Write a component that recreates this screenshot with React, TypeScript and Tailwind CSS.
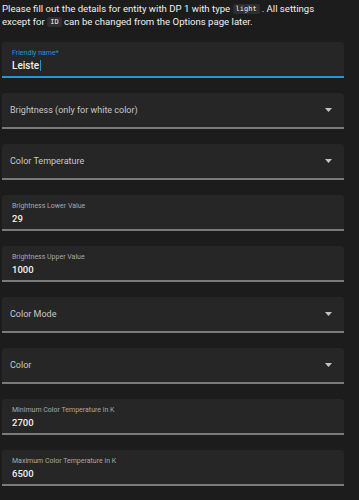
import React from "react";

const font = { fontFamily: "Roboto, 'Noto Sans', sans-serif" };
const mono = { fontFamily: "'DejaVu Sans Mono', monospace" };

function Caret() {
  return (
    <svg width="7" height="4" viewBox="0 0 7 4" className="shrink-0">
      <path d="M0 0 L7 0 L3.5 4 Z" fill="#c4c4c4" />
    </svg>
  );
}

function SelectField({ label }: { label: string }) {
  return (
    <div className="h-[36px] w-[342px] bg-[#262626] rounded-t-[3px] border-b-2 border-[#7a7a7a] flex items-center pl-[8px] pr-[12px]">
      <span className="flex-1 text-[9px] text-[#c8c8c8] pt-[1px]">{label}</span>
      <Caret />
    </div>
  );
}

function ValueField({ label, value }: { label: string; value: string }) {
  return (
    <div className="h-[36px] w-[342px] bg-[#262626] rounded-t-[3px] border-b-2 border-[#7a7a7a] flex flex-col pl-[10px] pt-[7px]">
      <span className="text-[7px] leading-[9px] text-[#a8a8a8]">{label}</span>
      <span className="text-[9.5px] leading-[13px] text-[#f2f2f2] font-medium mt-[1px]">{value}</span>
    </div>
  );
}

export default function App() {
  return (
    <div className="w-[359px] h-[500px] bg-[#1c1c1c] overflow-hidden pl-[2px]" style={font}>
      <p className="h-[28px] text-[9.6px] leading-[13px] text-[#f0f0f0] pt-[2px] w-[330px]">
        Please fill out the details for entity with DP 1 with type{" "}
        <code className="inline-block align-middle bg-[#2e2e2e] rounded-[2px] px-[3px] mr-[2px] text-[7px] leading-[10px]" style={mono}>light</code>
        . All settings except for{" "}
        <code className="inline-block align-middle bg-[#2e2e2e] rounded-[2px] px-[3px] text-[7px] leading-[10px]" style={mono}>ID</code>{" "}
        can be changed from the Options page later.
      </p>
      <div className="mt-[14px] flex flex-col gap-[15px]">
        <div className="h-[36px] w-[342px] bg-[#262626] rounded-t-[3px] border-b-2 border-[#1a9ad8] flex flex-col pl-[10px] pt-[7px]">
          <span className="text-[7px] leading-[9px] text-[#1e96d6]">Friendly name*</span>
          <span className="text-[10px] leading-[13px] text-[#f2f2f2] font-medium mt-[1px] flex items-center">
            Leiste<span className="inline-block w-[1px] h-[11px] bg-[#1e96d6] ml-[1px]" />
          </span>
        </div>
        <SelectField label="Brightness (only for white color)" />
        <SelectField label="Color Temperature" />
        <ValueField label="Brightness Lower Value" value="29" />
        <ValueField label="Brightness Upper Value" value="1000" />
        <SelectField label="Color Mode" />
        <SelectField label="Color" />
        <ValueField label="Minimum Color Temperature in K" value="2700" />
        <ValueField label="Maximum Color Temperature in K" value="6500" />
      </div>
    </div>
  );
}
